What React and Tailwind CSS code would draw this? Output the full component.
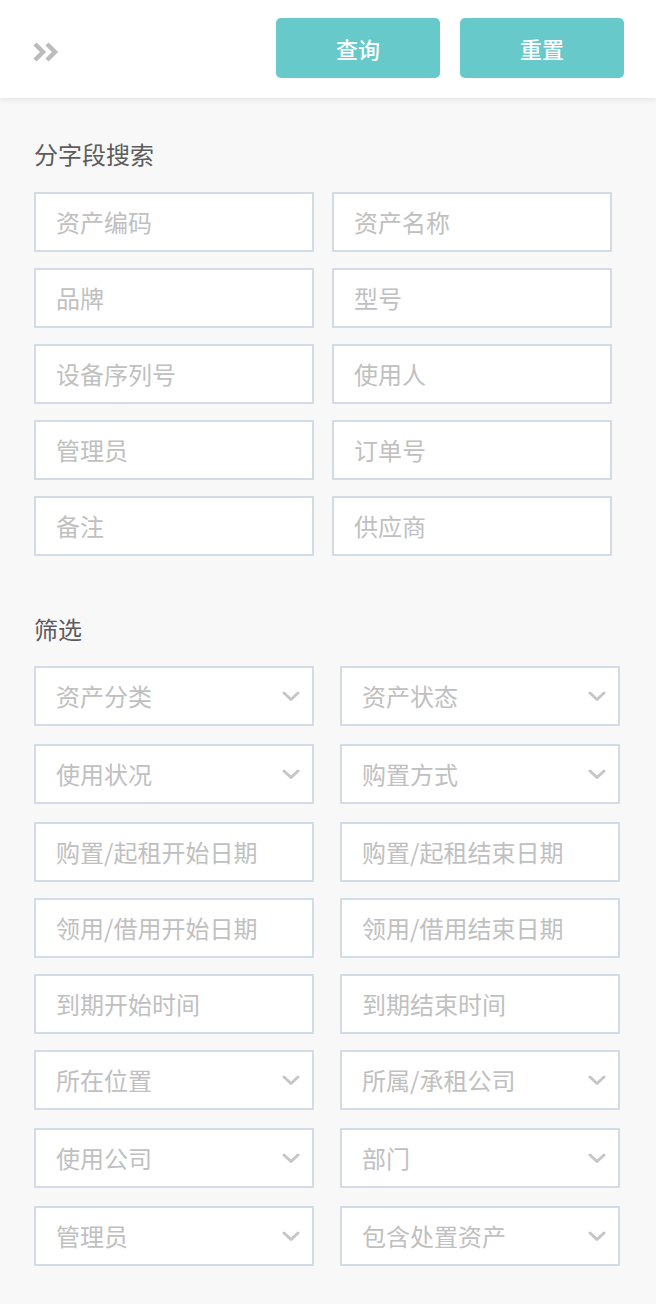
import React from 'react';

const searchFields = [
	['资产编码', '资产名称'],
	['品牌', '型号'],
	['设备序列号', '使用人'],
	['管理员', '订单号'],
	['备注', '供应商'],
];

// type: s = select, d = date input
const filterRows = [
	{ type: 's', items: ['资产分类', '资产状态'] },
	{ type: 's', items: ['使用状况', '购置方式'] },
	{ type: 'd', items: ['购置/起租开始日期', '购置/起租结束日期'] },
	{ type: 'd', items: ['领用/借用开始日期', '领用/借用结束日期'] },
	{ type: 'd', items: ['到期开始时间', '到期结束时间'] },
	{ type: 's', items: ['所在位置', '所属/承租公司'] },
	{ type: 's', items: ['使用公司', '部门'] },
	{ type: 's', items: ['管理员', '包含处置资产'] },
];

const Chevron = () => (
	<svg width="18" height="11" viewBox="0 0 18 11" fill="none" className="shrink-0">
		<polyline points="2,2 9,8.5 16,2" stroke="#c6c6c6" strokeWidth="3" strokeLinecap="round" strokeLinejoin="round" />
	</svg>
);

const DoubleChevron = () => (
	<svg width="26" height="20" viewBox="0 0 26 20" fill="none" style={{ filter: 'blur(0.7px)' }}>
		<polyline points="2,2 10,10 2,18" stroke="#bcbcbc" strokeWidth="4.5" strokeLinejoin="miter" />
		<polyline points="14,2 22,10 14,18" stroke="#bcbcbc" strokeWidth="4.5" strokeLinejoin="miter" />
	</svg>
);

class Field extends React.Component {
	render() {
		const { label, select } = this.props;
		return (
			<div className="w-[280px] h-[60px] bg-white border-2 border-[#d3dce6] flex items-center pl-[20px] pr-[12px]">
				<span className="flex-1 text-[24px] leading-none text-[#c0c0c0] whitespace-nowrap">{label}</span>
				{select ? <Chevron /> : null}
			</div>
		);
	}
}

export default function App() {
	return (
		<div className="min-h-[1304px] bg-[#f8f8f8]" style={{ fontFamily: '"Noto Sans CJK SC", "Noto Sans", sans-serif' }}>
			{/* Top bar */}
			<div className="h-[98px] bg-white flex items-center justify-between pl-[33px] pr-[32px] shadow-[0_2px_6px_rgba(0,0,0,0.08)] relative">
				<div className="mt-[6px]">
					<DoubleChevron />
				</div>
				<div className="flex gap-[20px] -mt-[2px]">
					<button className="w-[164px] h-[60px] rounded-[5px] bg-[#67c9ca] text-white text-[22px] font-medium">查询</button>
					<button className="w-[164px] h-[60px] rounded-[5px] bg-[#67c9ca] text-white text-[22px] font-medium">重置</button>
				</div>
			</div>

			{/* 分字段搜索 */}
			<div className="px-[34px] pt-[41px]">
				<h2 className="text-[24px] leading-[30px] text-[#5c5c5c] mb-[23px]">分字段搜索</h2>
				<div className="flex flex-col gap-[16px]">
					{searchFields.map((row, i) => (
						<div key={i} className="flex gap-[18px]">
							<Field label={row[0]} />
							<Field label={row[1]} />
						</div>
					))}
				</div>

				{/* 筛选 */}
				<h2 className="text-[24px] leading-[30px] text-[#5c5c5c] mt-[58px] mb-[22px]">筛选</h2>
				<div className="flex flex-col">
					{filterRows.map((row, i) => (
						<div key={i} className={'flex gap-[26px] ' + (row.type === 's' ? 'mb-[18px]' : 'mb-[16px]')}>
							<Field label={row.items[0]} select={row.type === 's'} />
							<Field label={row.items[1]} select={row.type === 's'} />
						</div>
					))}
				</div>
			</div>
		</div>
	);
}
